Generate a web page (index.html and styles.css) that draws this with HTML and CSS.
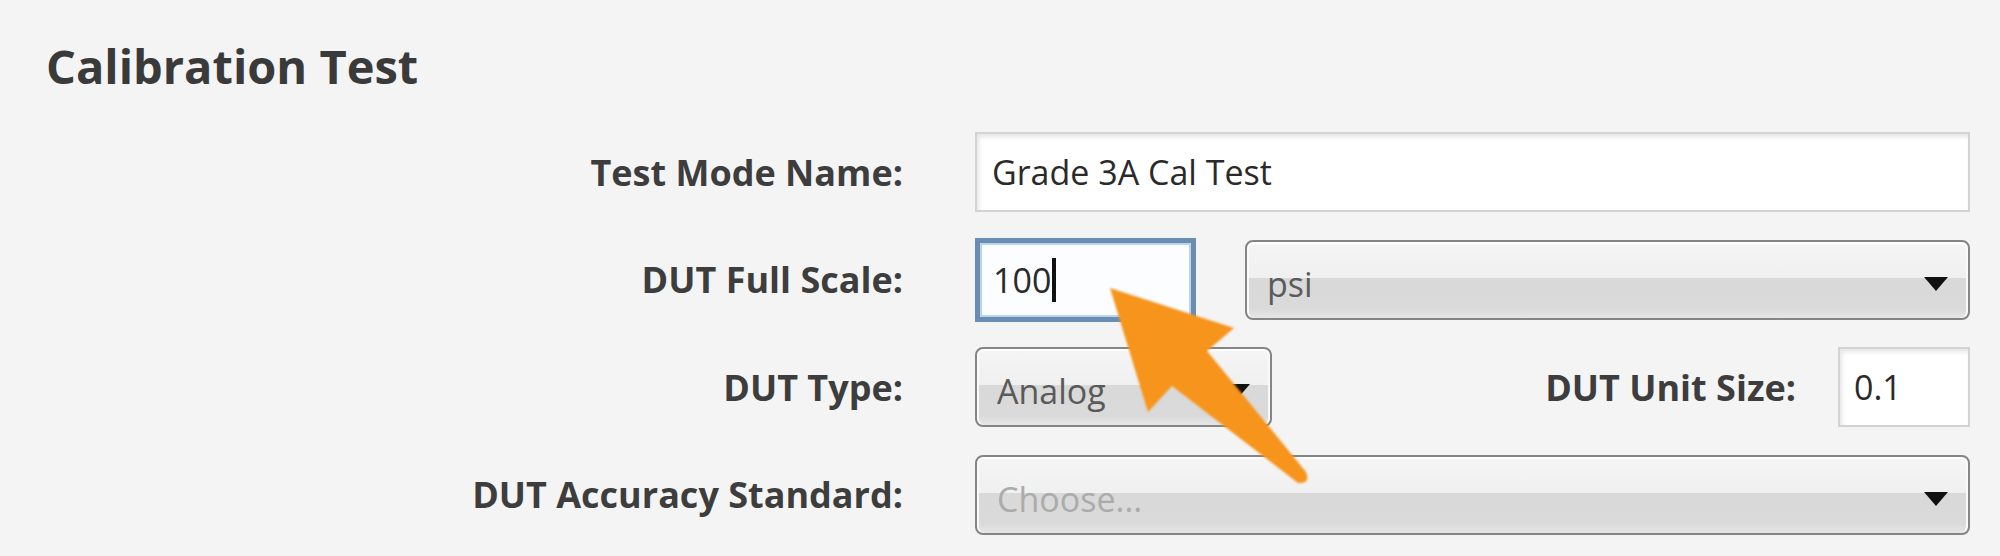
FILE: index.html
```html
<!DOCTYPE html>
<html>
<head>
<meta charset="utf-8">
<link rel="stylesheet" href="styles.css">
</head>
<body>
<div class="page">
  <h1 class="title">Calibration Test</h1>
  <div class="form">
    <div class="lbl">Test Mode Name:</div>
    <div class="field">
      <div class="input grow">Grade 3A Cal Test</div>
    </div>

    <div class="lbl">DUT Full Scale:</div>
    <div class="field">
      <div class="input focus">100<span class="caret"></span></div>
      <div class="select grow"><span class="val">psi</span><span class="arrow"></span></div>
    </div>

    <div class="lbl">DUT Type:</div>
    <div class="field">
      <div class="select type"><span class="val">Analog</span><span class="arrow"></span></div>
      <div class="sublbl">DUT Unit Size:</div>
      <div class="input unit">0.1</div>
    </div>

    <div class="lbl">DUT Accuracy Standard:</div>
    <div class="field">
      <div class="select grow"><span class="val placeholder">Choose...</span><span class="arrow"></span></div>
    </div>
  </div>

  <svg class="pointer" width="2000" height="556" viewBox="0 0 2000 556" aria-hidden="true">
    <defs>
      <filter id="soft" x="-10%" y="-10%" width="120%" height="120%">
        <feGaussianBlur stdDeviation="1.2"/>
      </filter>
    </defs>
    <path d="M1110 288 L1234 328 L1207 351 L1306 472 Q1311 484 1298 483 L1172 386 L1148 412 Z" fill="#f7941e" filter="url(#soft)"/>
  </svg>
</div>
</body>
</html>
```

FILE: styles.css
```css
* { box-sizing: border-box; }

html, body {
  margin: 0;
  padding: 0;
  background: #f4f4f4;
}

.page {
  position: relative;
  width: 2000px;
  height: 556px;
  overflow: hidden;
  font-family: "Open Sans", "Noto Sans", sans-serif;
  color: #3a3a3a;
}

.title {
  margin: 0;
  padding: 38px 0 0 46px;
  height: 132px;
  font-size: 47px;
  line-height: 56px;
  font-weight: 700;
  color: #3a3a3a;
}

.form {
  display: grid;
  grid-template-columns: 903px 1fr;
  grid-auto-rows: 80px;
  column-gap: 72px;
  row-gap: 27.5px;
  padding-right: 30px;
}

.lbl, .sublbl {
  display: flex;
  align-items: center;
  justify-content: flex-end;
  font-size: 36px;
  font-weight: 700;
  color: #3d3d3d;
  white-space: nowrap;
}

.field {
  display: flex;
  align-items: center;
  height: 80px;
}

.grow { flex: 1; }

.input {
  height: 80px;
  display: flex;
  align-items: center;
  padding-left: 15px;
  background: #ffffff;
  border: 2px solid #d3d3d3;
  box-shadow: inset 2px 3px 4px rgba(0,0,0,0.10);
  font-size: 34px;
  color: #2a2a2a;
  white-space: nowrap;
}

.input.focus {
  width: 221px;
  height: 84px;
  padding-left: 13px;
  border: 5px solid #6a8db2;
  background: #fbfdff;
  box-shadow: inset 0 0 0 2px #b9d5ee;
  margin-right: 49px;
}

.caret {
  display: inline-block;
  width: 4px;
  height: 44px;
  background: #111;
  margin-left: 1px;
}

.input.unit {
  width: 132px;
  padding-left: 14px;
}

.select {
  position: relative;
  height: 80px;
  display: flex;
  align-items: center;
  padding: 0 20px 0 20px;
  border: 2px solid #858585;
  border-radius: 8px;
  background: linear-gradient(to bottom, #f5f5f5 0%, #f0f0f0 47%, #d9d9d9 48%, #dadada 88%, #e6e6e6 100%);
  box-shadow: inset 0 2px 0 #ffffff, inset 2px 0 0 #fafafa, inset -2px 0 0 #fafafa;
  font-size: 34px;
  color: #5a5a5a;
}

.select .val {
  flex: 1;
  padding-top: 8px;
}

.select .placeholder { color: #ababab; }

.select .arrow {
  width: 0;
  height: 0;
  border-left: 12px solid transparent;
  border-right: 12px solid transparent;
  border-top: 14px solid #111;
  margin-top: 8px;
}

.select.type {
  width: 297px;
}

.sublbl {
  flex: 1;
  padding-right: 42px;
}

.pointer {
  position: absolute;
  left: 0;
  top: 0;
  pointer-events: none;
}
```
